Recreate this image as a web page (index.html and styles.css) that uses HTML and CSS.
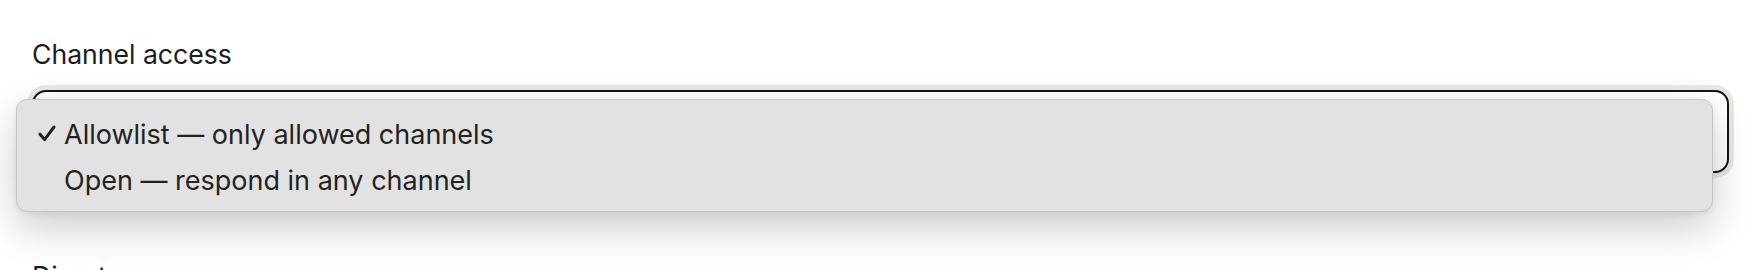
FILE: index.html
```html
<!DOCTYPE html>
<html lang="en">

<head>
    <meta charset="UTF-8">
    <meta name="viewport" content="width=device-width, initial-scale=1.0">
    <title>Channel settings</title>
    <link rel="stylesheet" href="styles.css">
</head>

<body>
    <div class="settings-form">
        <div class="field">
            <label class="field-label" for="channel-access">Channel access</label>
            <div class="select-wrap">
                <div class="select-box" id="channel-access"></div>
                <!-- open popup menu -->
                <ul class="popup-menu">
                    <li class="menu-item selected">
                        <svg class="check" viewBox="0 0 18 17" width="18" height="17">
                            <path d="M2 9.2 L6.6 14.6 L16 2" fill="none" stroke="#222" stroke-width="3" stroke-linecap="round" stroke-linejoin="round"/>
                        </svg>
                        <span>Allowlist — only allowed channels</span>
                    </li>
                    <li class="menu-item">
                        <span>Open — respond in any channel</span>
                    </li>
                </ul>
            </div>
        </div>

        <div class="field">
            <label class="field-label">Direct messages</label>
        </div>
    </div>
</body>

</html>
```

FILE: styles.css
```css
body {
    margin: 0;
    padding: 0;
    background-color: #ffffff;
    font-family: Inter, "Noto Sans", sans-serif;
    color: #1c1c1c;
    overflow: hidden;
}

.settings-form {
    padding: 37px 17px 0 32px;
}

.field {
    margin-bottom: 86px;
}

.field-label {
    display: block;
    font-size: 26.6px;
    line-height: 34px;
    color: #1c1c1c;
    margin-bottom: 19px;
}

.select-wrap {
    position: relative;
}

.select-box {
    height: 79px;
    border: 2px solid #141414;
    border-radius: 14px;
    background-color: #ffffff;
    box-shadow: 0 0 0 5px #e7e7e3;
}

.popup-menu {
    position: absolute;
    left: -16px;
    top: 9px;
    width: 1695px;
    margin: 0;
    padding: 11px 0 8px;
    list-style: none;
    background-color: #e2e2e2;
    border: 1px solid #c4c4c4;
    border-radius: 11px;
    box-shadow: 0 16px 40px rgba(0, 0, 0, 0.2), 0 2px 6px rgba(0, 0, 0, 0.06);
}

.menu-item {
    display: flex;
    align-items: center;
    height: 46px;
    padding-left: 47px;
    position: relative;
    font-size: 27px;
    color: #222222;
}

.check {
    position: absolute;
    left: 21px;
    top: 14px;
}
```
